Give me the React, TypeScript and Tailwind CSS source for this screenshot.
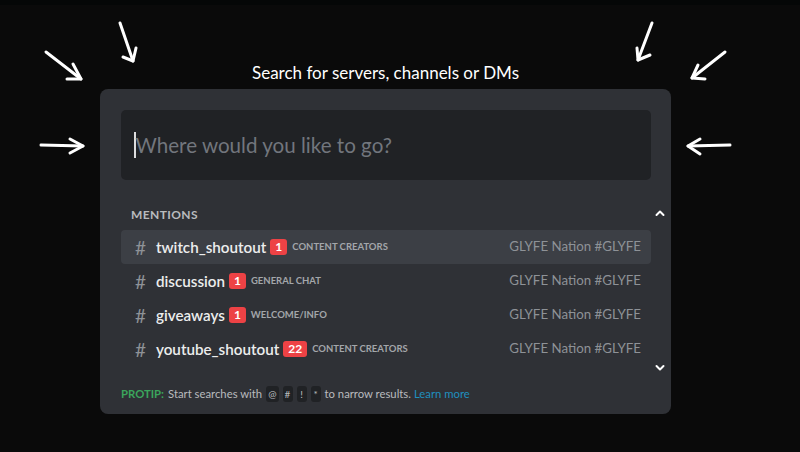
import React from "react";

const rows = [
  { name: "twitch_shoutout", count: "1", cat: "CONTENT CREATORS", active: true },
  { name: "discussion", count: "1", cat: "GENERAL CHAT", active: false },
  { name: "giveaways", count: "1", cat: "WELCOME/INFO", active: false },
  { name: "youtube_shoutout", count: "22", cat: "CONTENT CREATORS", active: false },
];

function Arrows() {
  const s = { stroke: "white", strokeWidth: 3, strokeLinecap: "round" as const, strokeLinejoin: "round" as const, fill: "none" };
  return (
    <svg className="absolute left-0 top-0 pointer-events-none" width="800" height="452" viewBox="0 0 800 452">
      <path d="M46 52 L81 79" {...s} />
      <path d="M73 64 L81 79 L67 79" {...s} />
      <path d="M120 23 L133 61" {...s} />
      <path d="M123 57 L133 61 L136 48" {...s} />
      <path d="M652 23 L638 60" {...s} />
      <path d="M637 48 L638 60 L650 55" {...s} />
      <path d="M725 52 L692 78" {...s} />
      <path d="M698 65 L692 78 L705 79" {...s} />
      <path d="M41 145 L83 146" {...s} />
      <path d="M70 139 L83 146 L70 153" {...s} />
      <path d="M730 145 L688 146" {...s} />
      <path d="M700 139 L688 146 L700 154" {...s} />
    </svg>
  );
}

function Kbd({ c }: { c: string }) {
  return (
    <span className="inline-flex h-[16px] min-w-[10px] items-center justify-center rounded-[3px] bg-[#202225] px-[2px] text-[10px] text-[#b9bbbe]">
      {c}
    </span>
  );
}

export default function App() {
  return (
    <div
      className="relative h-[452px] w-[800px] overflow-hidden bg-[#0a0a0a]"
      style={{ fontFamily: "Lato, 'Noto Sans', sans-serif" }}
    >
      <div className="h-[5px] bg-[#050707]" />
      <div className="ml-[100px] flex w-[571px] flex-col">
        <div className="mt-[58px] h-[20px] text-center text-[17px] leading-[20px] text-white">
          Search for servers, channels or DMs
        </div>
        <div className="mt-[6px] flex h-[325px] w-[571px] flex-col rounded-[8px] bg-[#2f3136] px-[21px] pt-[21px]">
          <div className="flex h-[70px] w-[530px] items-center rounded-[5px] bg-[#202225] pl-[13px]">
            <div className="h-[26px] w-[1.5px] bg-[#dcddde]" />
            <span className="text-[20.6px] text-[#72767d]">Where would you like to go?</span>
          </div>
          <div className="relative mt-[25px] w-[530px]">
            <div className="h-[20px] pl-[10px] text-[12px] font-bold leading-[20px] tracking-[0.4px] text-[#b9bbbe]">
              MENTIONS
            </div>
            <div className="mt-[5px] flex flex-col">
              {rows.map((r) => (
                <div
                  key={r.name}
                  className={
                    "flex h-[34px] items-center rounded-[4px] pl-[14px] pr-[10px] " +
                    (r.active ? "bg-[#3c3f45]" : "")
                  }
                >
                  <span className="w-[21px] text-[19px] leading-none text-[#8e9297]">#</span>
                  <span className="text-[15.2px] font-semibold text-[#eceded]">{r.name}</span>
                  <span className="ml-[4px] flex h-[16px] items-center rounded-[3px] bg-[#ed4245] px-[5px] text-[12px] font-bold text-white">
                    {r.count}
                  </span>
                  <span className="ml-[5px] mt-[1px] text-[9.5px] font-bold text-[#a3a6aa]">{r.cat}</span>
                  <span className="ml-auto text-[13.3px] text-[#8e9297]">GLYFE Nation #GLYFE</span>
                </div>
              ))}
            </div>
            <svg className="absolute right-[-14px] top-[4px]" width="10" height="8" viewBox="0 0 10 8">
              <path d="M1.5 6 L5 2.5 L8.5 6" stroke="white" strokeWidth="2" fill="none" strokeLinecap="round" strokeLinejoin="round" />
            </svg>
            <svg className="absolute right-[-14px] top-[159px]" width="10" height="8" viewBox="0 0 10 8">
              <path d="M1.5 2 L5 5.5 L8.5 2" stroke="white" strokeWidth="2" fill="none" strokeLinecap="round" strokeLinejoin="round" />
            </svg>
          </div>
          <div className="mt-[20px] flex items-center text-[11.3px] text-[#b9bbbe]">
            <span className="font-bold text-[#3ba55c]">PROTIP:</span>
            <span className="ml-[4px]">Start searches with</span>
            <span className="ml-[4px] flex gap-[4px]">
              <Kbd c="@" />
              <Kbd c="#" />
              <Kbd c="!" />
              <Kbd c="*" />
            </span>
            <span className="ml-[4px]">to narrow results.</span>
            <span className="ml-[3px] text-[#1f8fbf]">Learn more</span>
          </div>
        </div>
      </div>
      <Arrows />
    </div>
  );
}
